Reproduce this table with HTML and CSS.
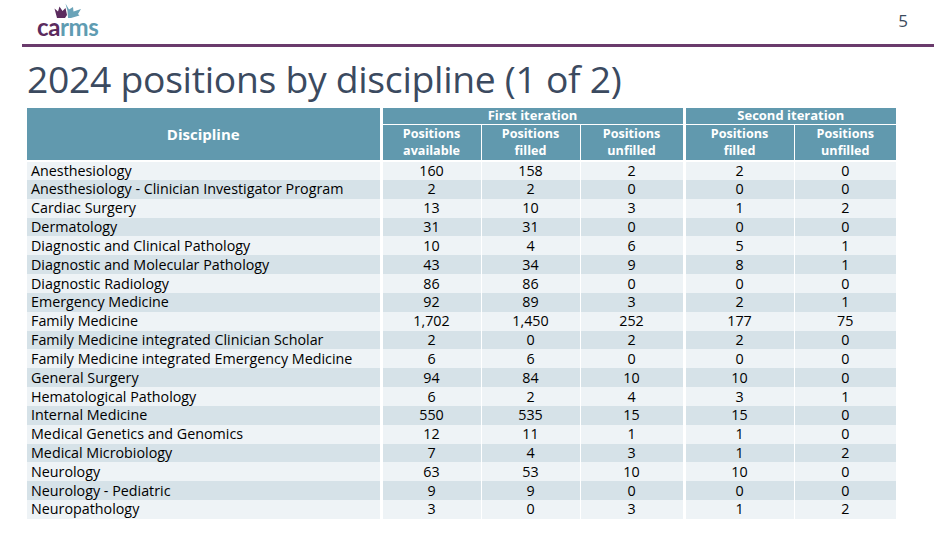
FILE: index.html
```html
<!DOCTYPE html>
<html>
<head>
<meta charset="utf-8">
<link rel="stylesheet" href="styles.css">
</head>
<body>
<div class="slide">
  <header class="top">
    <div class="logo">
      <svg class="mark" width="30" height="16" viewBox="0 0 30 16">
        <path d="M1.5 5.5 L5 8.5 L6.5 3.5 L9.5 8 L12.5 5 L14 12 L12 15 L4 15 Z" fill="#5b2b5e"/>
        <path d="M12.5 0.5 L16 6.5 L20 4 L20.5 8.5 L28 6 L25 11 L26.5 12.5 L18 15 L15 15 L14.5 8 Z" fill="#6aa3b8"/>
      </svg>
      <div class="wordmark"><span class="ca">ca</span><span class="rms">rms</span></div>
    </div>
    <div class="pageno">5</div>
  </header>
  <div class="rule"></div>
  <h1 class="title">2024 positions by discipline (1 of 2)</h1>
  <table class="data">
    <colgroup>
      <col class="c-disc"><col class="c-num"><col class="c-num2"><col class="c-num3"><col class="c-num4"><col class="c-num5">
    </colgroup>
    <thead>
      <tr class="h1">
        <th rowspan="2" class="disc-h">Discipline</th>
        <th colspan="3" class="grp gsep">First iteration</th>
        <th colspan="2" class="grp gsep2">Second iteration</th>
      </tr>
      <tr class="h2">
        <th class="sub">Positions<br>available</th>
        <th class="sub thin">Positions<br>filled</th>
        <th class="sub thin">Positions<br>unfilled</th>
        <th class="sub grpstart">Positions<br>filled</th>
        <th class="sub thin">Positions<br>unfilled</th>
      </tr>
    </thead>
    <tbody>
      <tr><td class="name">Anesthesiology</td><td>160</td><td class="thin">158</td><td class="thin">2</td><td class="grpstart">2</td><td class="thin">0</td></tr>
      <tr><td class="name">Anesthesiology - Clinician Investigator Program</td><td>2</td><td class="thin">2</td><td class="thin">0</td><td class="grpstart">0</td><td class="thin">0</td></tr>
      <tr><td class="name">Cardiac Surgery</td><td>13</td><td class="thin">10</td><td class="thin">3</td><td class="grpstart">1</td><td class="thin">2</td></tr>
      <tr><td class="name">Dermatology</td><td>31</td><td class="thin">31</td><td class="thin">0</td><td class="grpstart">0</td><td class="thin">0</td></tr>
      <tr><td class="name">Diagnostic and Clinical Pathology</td><td>10</td><td class="thin">4</td><td class="thin">6</td><td class="grpstart">5</td><td class="thin">1</td></tr>
      <tr><td class="name">Diagnostic and Molecular Pathology</td><td>43</td><td class="thin">34</td><td class="thin">9</td><td class="grpstart">8</td><td class="thin">1</td></tr>
      <tr><td class="name">Diagnostic Radiology</td><td>86</td><td class="thin">86</td><td class="thin">0</td><td class="grpstart">0</td><td class="thin">0</td></tr>
      <tr><td class="name">Emergency Medicine</td><td>92</td><td class="thin">89</td><td class="thin">3</td><td class="grpstart">2</td><td class="thin">1</td></tr>
      <tr><td class="name">Family Medicine</td><td>1,702</td><td class="thin">1,450</td><td class="thin">252</td><td class="grpstart">177</td><td class="thin">75</td></tr>
      <tr><td class="name">Family Medicine integrated Clinician Scholar</td><td>2</td><td class="thin">0</td><td class="thin">2</td><td class="grpstart">2</td><td class="thin">0</td></tr>
      <tr><td class="name">Family Medicine integrated Emergency Medicine</td><td>6</td><td class="thin">6</td><td class="thin">0</td><td class="grpstart">0</td><td class="thin">0</td></tr>
      <tr><td class="name">General Surgery</td><td>94</td><td class="thin">84</td><td class="thin">10</td><td class="grpstart">10</td><td class="thin">0</td></tr>
      <tr><td class="name">Hematological Pathology</td><td>6</td><td class="thin">2</td><td class="thin">4</td><td class="grpstart">3</td><td class="thin">1</td></tr>
      <tr><td class="name">Internal Medicine</td><td>550</td><td class="thin">535</td><td class="thin">15</td><td class="grpstart">15</td><td class="thin">0</td></tr>
      <tr><td class="name">Medical Genetics and Genomics</td><td>12</td><td class="thin">11</td><td class="thin">1</td><td class="grpstart">1</td><td class="thin">0</td></tr>
      <tr><td class="name">Medical Microbiology</td><td>7</td><td class="thin">4</td><td class="thin">3</td><td class="grpstart">1</td><td class="thin">2</td></tr>
      <tr><td class="name">Neurology</td><td>63</td><td class="thin">53</td><td class="thin">10</td><td class="grpstart">10</td><td class="thin">0</td></tr>
      <tr><td class="name">Neurology - Pediatric</td><td>9</td><td class="thin">9</td><td class="thin">0</td><td class="grpstart">0</td><td class="thin">0</td></tr>
      <tr><td class="name">Neuropathology</td><td>3</td><td class="thin">0</td><td class="thin">3</td><td class="grpstart">1</td><td class="thin">2</td></tr>
    </tbody>
  </table>
</div>
</body>
</html>
```
FILE: styles.css
```css
* { box-sizing: border-box; }
html, body { margin: 0; padding: 0; background: #ffffff; }
body { font-family: "Open Sans", "Noto Sans", sans-serif; color: #000; }
.slide { width: 949px; height: 537px; overflow: hidden; }

.top { display: flex; justify-content: space-between; align-items: flex-start; height: 44px; padding: 0 41px 0 37px; }
.logo { display: flex; flex-direction: column; align-items: flex-start; padding-top: 3px; }
.mark { display: block; margin-left: 16px; }
.wordmark { font-family: "Lato", "Open Sans", sans-serif; font-weight: 700; font-size: 24px; line-height: 17px; letter-spacing: -0.4px; margin-top: -1px; }
.ca { color: #5b2b5e; }
.rms { color: #5f9cb2; }
.pageno { font-family: "Open Sans", sans-serif; font-size: 17px; color: #3b4a5c; padding-top: 9px; }

.rule { height: 3px; background: #6a3b6c; margin: 0 15px 0 22px; }

.title { margin: 3px 0 0 27px; font-weight: 400; font-size: 37.3px; line-height: 58px; height: 58px; color: #3b4a5f; letter-spacing: -0.3px; }

.data { margin-left: 27px; width: 869px; border-collapse: collapse; table-layout: fixed; font-size: 14.3px; }
.c-disc { width: 354px; }
.c-num { width: 100px; }
.c-num2 { width: 99px; }
.c-num3 { width: 104px; }
.c-num4 { width: 110px; }
.c-num5 { width: 102px; }

.data th { background: #6199ae; color: #fff; font-weight: 700; padding: 0; text-align: center; }
.disc-h { font-size: 15px; border-right: 3px solid #fff; border-bottom: 2px solid #fff; }
.h1 th.grp { height: 16px; font-size: 13px; line-height: 15px; border-bottom: 1px solid #fff; }
.gsep2 { border-left: 3px solid #fff; }
.h2 th { height: 37px; font-size: 12.6px; line-height: 17.2px; border-bottom: 2px solid #fff; }

.data td { height: 18.84px; padding: 0; text-align: center; line-height: 18px; white-space: nowrap; }
.data td.name { text-align: left; padding-left: 4px; border-right: 3px solid #fff; }
.data .thin { border-left: 1px solid #fff; }
.data .grpstart { border-left: 3px solid #fff; }
.data tbody tr:nth-child(odd) td { background: #eef3f6; }
.data tbody tr:nth-child(even) td { background: #d6e2e8; }
```
